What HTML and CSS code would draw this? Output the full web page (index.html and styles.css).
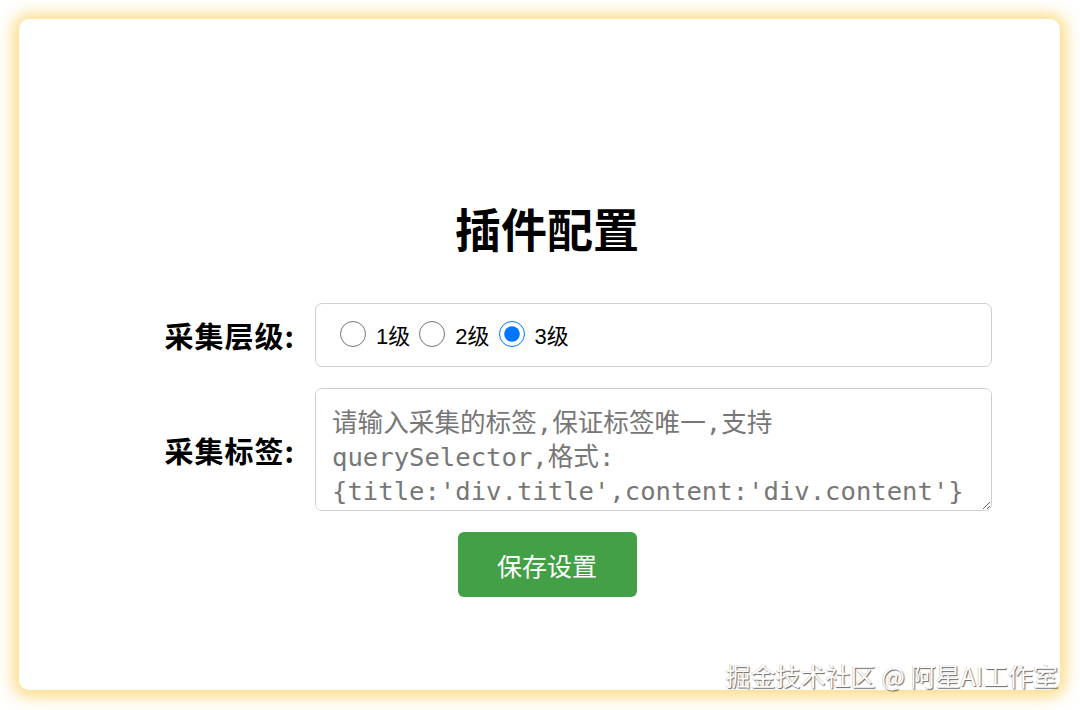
FILE: index.html
```html
<!DOCTYPE html>
<html lang="zh-CN">
<head>
    <meta charset="UTF-8">
    <meta name="viewport" content="width=device-width, initial-scale=1.0">
    <title>插件配置</title>
    <link rel="stylesheet" href="styles.css">
</head>
<body>

    <div class="card">
        <h1>插件配置</h1>

        <div class="form">
            <div class="form-row">
                <label class="form-label">采集层级:</label>
                <div class="radio-group">
                    <label class="radio-item"><input type="radio" name="level" value="1"> 1级</label>
                    <label class="radio-item"><input type="radio" name="level" value="2"> 2级</label>
                    <label class="radio-item"><input type="radio" name="level" value="3" checked> 3级</label>
                </div>
            </div>

            <div class="form-row">
                <label class="form-label" for="selector">采集标签:</label>
                <textarea id="selector" class="selector-input" placeholder="请输入采集的标签,保证标签唯一,支持querySelector,格式:{title:'div.title',content:'div.content'}"></textarea>
            </div>

            <div class="form-actions">
                <button class="save-button">保存设置</button>
            </div>
        </div>
    </div>

    <div class="watermark">掘金技术社区 @ 阿星AI工作室</div>

</body>
</html>
```

FILE: styles.css
```css
body {
    font-family: "Liberation Sans", "Noto Sans CJK SC", sans-serif;
    margin: 0;
    padding: 19px 20px 20px 19px;
    background-color: #fff;
    box-sizing: border-box;
    height: 710px;
    position: relative;
}

.card {
    height: 671px;
    box-sizing: border-box;
    padding: 181px 0 0 15px;
    background-color: #fff;
    border-radius: 10px;
    box-shadow: 0 1px 15px 6px rgba(252, 214, 115, 0.85);
}

h1 {
    margin: 0 0 48px;
    text-align: center;
    font-family: "Noto Sans CJK SC", sans-serif;
    font-size: 46px;
    line-height: 55px;
    font-weight: 700;
    color: #000;
}

.form {
    width: 890px;
    margin: 0 auto;
}

.form-row {
    display: grid;
    grid-template-columns: 193px 677px;
    column-gap: 20px;
    align-items: center;
    margin-bottom: 21px;
}

.form-label {
    text-align: right;
    font-family: "Noto Sans CJK SC", sans-serif;
    font-size: 29px;
    font-weight: 700;
    letter-spacing: 1px;
    color: #000;
}

.radio-group {
    display: flex;
    align-items: center;
    gap: 9px;
    height: 64px;
    box-sizing: border-box;
    padding: 0 0 2px 24px;
    border: 1.5px solid #cfcfcf;
    border-radius: 7px;
}

.radio-item {
    display: flex;
    align-items: center;
    font-size: 22px;
    color: #000;
}

.radio-item input {
    width: 26px;
    height: 26px;
    margin: 0 10px 0 0;
}

.selector-input {
    display: block;
    width: 677px;
    height: 123px;
    box-sizing: border-box;
    padding: 17px 16px 4px;
    border: 1.5px solid #cfcfcf;
    border-radius: 7px;
    font-family: "DejaVu Sans Mono", "Noto Sans CJK SC", monospace;
    font-size: 25.6px;
    line-height: 34px;
    color: #333;
    resize: vertical;
}

.selector-input::placeholder {
    color: #777;
}

.form-actions {
    display: flex;
    justify-content: center;
}

.save-button {
    width: 179px;
    height: 65px;
    background-color: #43a047;
    color: #fff;
    border: none;
    border-radius: 6px;
    font-family: "Noto Sans CJK SC", sans-serif;
    font-size: 25px;
    cursor: pointer;
}

.save-button:hover {
    background-color: #3d9142;
}

/* site watermark over the bottom right corner */
.watermark {
    position: absolute;
    right: 22px;
    bottom: 22px;
    font-family: "Noto Sans CJK SC", sans-serif;
    font-size: 25px;
    line-height: 25px;
    color: #fff;
    text-shadow: 1px 1px 1px rgba(0, 0, 0, 0.6), -0.5px -0.5px 0 rgba(0, 0, 0, 0.3);
}
```
